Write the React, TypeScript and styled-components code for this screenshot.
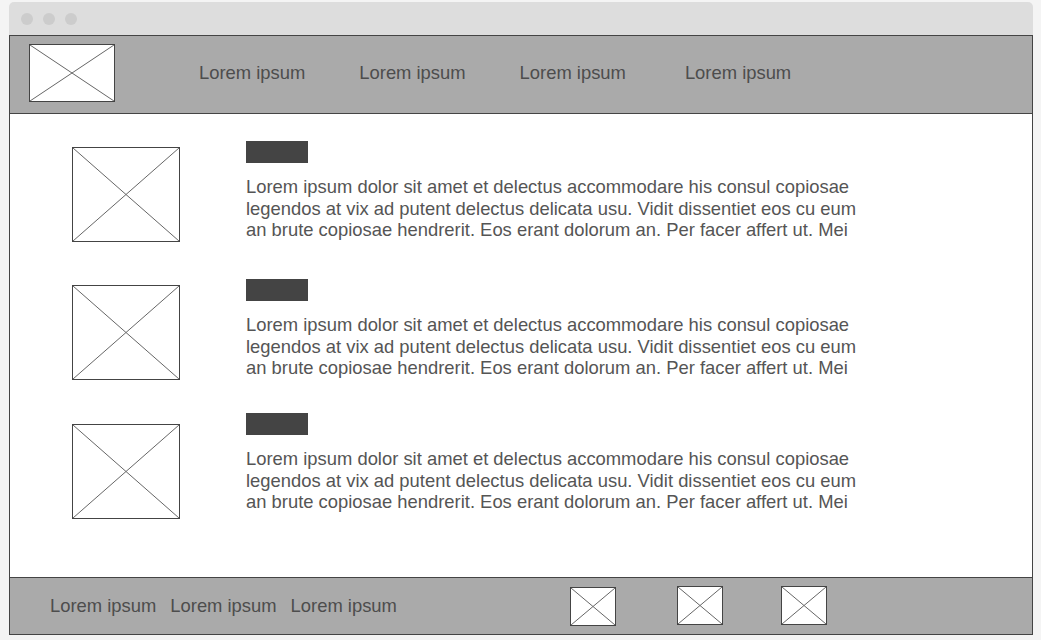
import React from "react";
import styled, { createGlobalStyle } from "styled-components";

const Global = createGlobalStyle`
  html, body { margin: 0; padding: 0; background: #f4f4f4; }
  body { font-family: "Liberation Sans", Arial, sans-serif; }
  * { box-sizing: border-box; }
`;

const Page = styled.div`
  width: 1041px;
  height: 640px;
  padding: 2px 8px 0 9px;
  background: #f4f4f4;
`;

const Window = styled.div`
  width: 1024px;
  display: flex;
  flex-direction: column;
`;

const TitleBar = styled.div`
  height: 33px;
  background: #dddddd;
  border-radius: 5px 5px 0 0;
  display: flex;
  align-items: center;
  gap: 10px;
  padding: 0 0 0 12px;
`;

const Dot = styled.span`
  width: 12px;
  height: 12px;
  border-radius: 50%;
  background: #cccccc;
`;

const Frame = styled.div`
  height: 600px;
  border: 1px solid #444;
  display: flex;
  flex-direction: column;
  background: #fff;
`;

const Header = styled.header`
  height: 78px;
  flex: none;
  background: #aaaaaa;
  border-bottom: 1px solid #444;
  display: flex;
  align-items: center;
  padding: 0 0 3px 19px;
`;

const Nav = styled.nav`
  display: flex;
  align-items: center;
  margin-left: 84px;
  gap: 54px;
`;

const NavItem = styled.span<{ $extra?: number }>`
  font-size: 18.4px;
  color: #4d4d4d;
  white-space: nowrap;
  margin-left: ${(p) => p.$extra ?? 0}px;
`;

const Content = styled.main`
  flex: 1;
  padding: 27px 0 0 62px;
  display: flex;
  flex-direction: column;
`;

const Row = styled.section<{ $top: number }>`
  display: flex;
  align-items: flex-start;
  gap: 66px;
  margin-top: ${(p) => p.$top}px;
`;

const PlaceholderBox = styled.div<{ $w: number; $h: number; $top?: number; $left?: number }>`
  width: ${(p) => p.$w}px;
  height: ${(p) => p.$h}px;
  flex: none;
  background: #fff;
  border: 1px solid #444;
  margin-top: ${(p) => p.$top ?? 0}px;
  margin-left: ${(p) => p.$left ?? 0}px;
  display: flex;
  svg {
    width: 100%;
    height: 100%;
    display: block;
  }
`;

const TextBlock = styled.div`
  display: flex;
  flex-direction: column;
`;

const Heading = styled.div`
  width: 62px;
  height: 22px;
  background: #444;
`;

const Paragraph = styled.p`
  margin: 13px 0 0;
  font-size: 18.4px;
  line-height: 21.6px;
  color: #555;
`;

const Line = styled.span`
  display: block;
  white-space: nowrap;
`;

const Footer = styled.footer`
  height: 57px;
  flex: none;
  background: #aaaaaa;
  border-top: 1px solid #444;
  display: flex;
  align-items: center;
  padding-left: 40px;
`;

const FooterLinks = styled.div`
  display: flex;
  gap: 14px;
`;

const FooterLink = styled.span`
  font-size: 18.4px;
  color: #4d4d4d;
  white-space: nowrap;
`;

const FooterIcons = styled.div`
  display: flex;
  align-items: center;
  margin-left: 173px;
`;

const Cross = () => (
  <svg viewBox="0 0 100 100" preserveAspectRatio="none">
    <line x1="0" y1="0" x2="100" y2="100" stroke="#666" strokeWidth="1" vectorEffect="non-scaling-stroke" />
    <line x1="100" y1="0" x2="0" y2="100" stroke="#666" strokeWidth="1" vectorEffect="non-scaling-stroke" />
  </svg>
);

const lines = [
  "Lorem ipsum dolor sit amet et delectus accommodare his consul copiosae",
  "legendos at vix ad putent delectus delicata usu. Vidit dissentiet eos cu eum",
  "an brute copiosae hendrerit. Eos erant dolorum an. Per facer affert ut. Mei",
];

const rows = [
  { top: 0, img: 6 },
  { top: 37, img: 6 },
  { top: 33, img: 11 },
];

const footerIcons = [0, 61, 58];

export default function App() {
  return (
    <>
      <Global />
      <Page>
        <Window>
          <TitleBar>
            <Dot />
            <Dot />
            <Dot />
          </TitleBar>
          <Frame>
            <Header>
              <PlaceholderBox $w={86} $h={58}>
                <Cross />
              </PlaceholderBox>
              <Nav>
                <NavItem>Lorem ipsum</NavItem>
                <NavItem>Lorem ipsum</NavItem>
                <NavItem>Lorem ipsum</NavItem>
                <NavItem $extra={5}>Lorem ipsum</NavItem>
              </Nav>
            </Header>
            <Content>
              {rows.map((r, i) => (
                <Row key={i} $top={r.top}>
                  <PlaceholderBox $w={108} $h={95} $top={r.img}>
                    <Cross />
                  </PlaceholderBox>
                  <TextBlock>
                    <Heading />
                    <Paragraph>
                      {lines.map((l) => (
                        <Line key={l}>{l}</Line>
                      ))}
                    </Paragraph>
                  </TextBlock>
                </Row>
              ))}
            </Content>
            <Footer>
              <FooterLinks>
                <FooterLink>Lorem ipsum</FooterLink>
                <FooterLink>Lorem ipsum</FooterLink>
                <FooterLink>Lorem ipsum</FooterLink>
              </FooterLinks>
              <FooterIcons>
                {footerIcons.map((m, i) => (
                  <PlaceholderBox key={i} $w={46} $h={39} $left={m} $top={i === 0 ? 1 : -1}>
                    <Cross />
                  </PlaceholderBox>
                ))}
              </FooterIcons>
            </Footer>
          </Frame>
        </Window>
      </Page>
    </>
  );
}
